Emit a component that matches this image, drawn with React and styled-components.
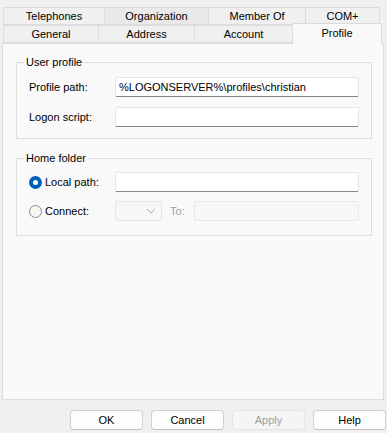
import React from 'react'
import styled, { createGlobalStyle } from 'styled-components'

const GlobalStyle = createGlobalStyle`
    html, body {
        margin: 0;
        padding: 0;
        background: #f0f0f0;
    }
    body {
        font-family: "Liberation Sans", Arial, sans-serif;
        font-size: 11px;
        color: #000;
    }
`

const topTabs = [
    { label: 'Telephones', width: 102 },
    { label: 'Organization', width: 105, hover: true },
    { label: 'Member Of', width: 98 },
    { label: 'COM+', width: 75 },
]

const bottomTabs = [
    { label: 'General', width: 96 },
    { label: 'Address', width: 97 },
    { label: 'Account', width: 99 },
    { label: 'Profile', width: 90, active: true },
]

const App = () => (
    <Window>
        <GlobalStyle />
        <TabStrip>
            <TabRow>
                {topTabs.map(t => (
                    <Tab key={t.label} $width={t.width} $hover={t.hover}>{t.label}</Tab>
                ))}
            </TabRow>
            <TabRow>
                {bottomTabs.map(t => (
                    <Tab key={t.label} $width={t.width} $active={t.active}>{t.label}</Tab>
                ))}
            </TabRow>
        </TabStrip>

        <Panel>
            <Group>
                <Caption>User profile</Caption>
                <FieldRow>
                    <Label>Profile path:</Label>
                    <TextBox defaultValue="%LOGONSERVER%\profiles\christian" />
                </FieldRow>
                <FieldRow>
                    <Label>Logon script:</Label>
                    <TextBox />
                </FieldRow>
            </Group>

            <Group $gap={9} $top={13} $bottom={14}>
                <Caption>Home folder</Caption>
                <FieldRow>
                    <RadioLabel>
                        <Radio $checked />
                        Local path:
                    </RadioLabel>
                    <TextBox />
                </FieldRow>
                <FieldRow>
                    <RadioLabel>
                        <Radio />
                        Connect:
                    </RadioLabel>
                    <DriveSelect>
                        <svg width="10" height="6" viewBox="0 0 10 6">
                            <path d="M1 1 L5 5 L9 1" fill="none" stroke="#a8a8a8" strokeWidth="1" />
                        </svg>
                    </DriveSelect>
                    <ToLabel>To:</ToLabel>
                    <TextBox disabled $disabled />
                </FieldRow>
            </Group>
        </Panel>

        <ButtonBar>
            <Button>OK</Button>
            <Button>Cancel</Button>
            <Button disabled>Apply</Button>
            <Button>Help</Button>
        </ButtonBar>
    </Window>
)

export default App

// window
const Window = styled.div`
    width: 387px;
    height: 433px;
    box-sizing: border-box;
    padding: 7px 0 3px 2px;
    display: flex;
    flex-direction: column;
`

// tabs
const TabStrip = styled.div`
    display: flex;
    flex-direction: column;
    padding-left: 1px;
`

const TabRow = styled.div`
    display: flex;
    height: 18px;
`

const Tab = styled.div`
    box-sizing: border-box;
    width: ${p => p.$width}px;
    height: ${p => (p.$active ? 21 : 18)}px;
    margin-top: ${p => (p.$active ? -2 : 0)}px;
    margin-left: -1px;
    border: 1px solid #dcdcdc;
    border-bottom: ${p => (p.$active ? 'none' : '1px solid #dcdcdc')};
    background: ${p => (p.$active ? '#f9f9f9' : p.$hover ? '#e9e9e9' : '#f0f0f0')};
    display: flex;
    align-items: ${p => (p.$active ? 'flex-start' : 'center')};
    padding-top: ${p => (p.$active ? 2 : 0)}px;
    justify-content: center;
    line-height: 14px;
    position: relative;
    z-index: ${p => (p.$active ? 2 : 1)};
    &:first-child {
        margin-left: 0;
    }
`

// panel
const Panel = styled.div`
    box-sizing: border-box;
    width: 382px;
    flex: 1;
    background: #f9f9f9;
    border: 1px solid #dcdcdc;
    padding: 18px 11px 0 13px;
    display: flex;
    flex-direction: column;
    gap: 19px;
`

const Group = styled.div`
    position: relative;
    border: 1px solid #dcdcdc;
    padding: ${p => p.$top || 14}px 12px ${p => p.$bottom || 11}px 12px;
    display: flex;
    flex-direction: column;
    gap: ${p => p.$gap || 10}px;
`

const Caption = styled.span`
    position: absolute;
    top: -8px;
    left: 7px;
    padding: 0 2px;
    background: #f9f9f9;
    line-height: 15px;
`

const FieldRow = styled.div`
    display: flex;
    align-items: center;
    height: 20px;
`

const Label = styled.span`
    width: 86px;
    flex-shrink: 0;
`

const RadioLabel = styled.label`
    width: 86px;
    flex-shrink: 0;
    display: flex;
    align-items: center;
    gap: 3px;
`

const Radio = styled.span`
    box-sizing: border-box;
    width: 13px;
    height: 13px;
    border-radius: 50%;
    background: ${p => (p.$checked ? '#005fb8' : '#f6f6f6')};
    border: ${p => (p.$checked ? 'none' : '1px solid #8a8a8a')};
    display: flex;
    align-items: center;
    justify-content: center;
    &::after {
        content: '';
        display: ${p => (p.$checked ? 'block' : 'none')};
        width: 5px;
        height: 5px;
        border-radius: 50%;
        background: #fff;
    }
`

const TextBox = styled.input`
    box-sizing: border-box;
    flex: 1;
    min-width: 0;
    height: 20px;
    margin: 0;
    padding: 0 3px 1px;
    font-family: "Liberation Sans", Arial, sans-serif;
    font-size: 11px;
    color: #000;
    background: ${p => (p.$disabled ? '#f7f7f7' : '#fff')};
    border: 1px solid ${p => (p.$disabled ? '#e8e8e8' : '#e5e5e5')};
    border-bottom-color: ${p => (p.$disabled ? '#e8e8e8' : '#868686')};
    border-radius: 2px;
    outline: none;
`

const DriveSelect = styled.div`
    box-sizing: border-box;
    width: 47px;
    height: 20px;
    background: #f7f7f7;
    border: 1px solid #e5e5e5;
    border-radius: 2px;
    display: flex;
    align-items: center;
    justify-content: flex-end;
    padding-right: 5px;
`

const ToLabel = styled.span`
    width: 32px;
    padding-left: 8px;
    box-sizing: border-box;
    color: #a0a0a0;
`

// buttons
const ButtonBar = styled.div`
    display: flex;
    justify-content: flex-end;
    gap: 8px;
    margin-top: 10px;
    padding-right: 1px;
`

const Button = styled.button`
    box-sizing: border-box;
    width: 73px;
    height: 20px;
    margin: 0;
    padding: 0;
    font-family: "Liberation Sans", Arial, sans-serif;
    font-size: 11px;
    color: #000;
    background: #fdfdfd;
    border: 1px solid #d0d0d0;
    border-bottom-color: #c0c0c0;
    border-radius: 4px;
    &:disabled {
        color: #a0a0a0;
        background: #f5f5f5;
        border-color: #e5e5e5;
    }
`
